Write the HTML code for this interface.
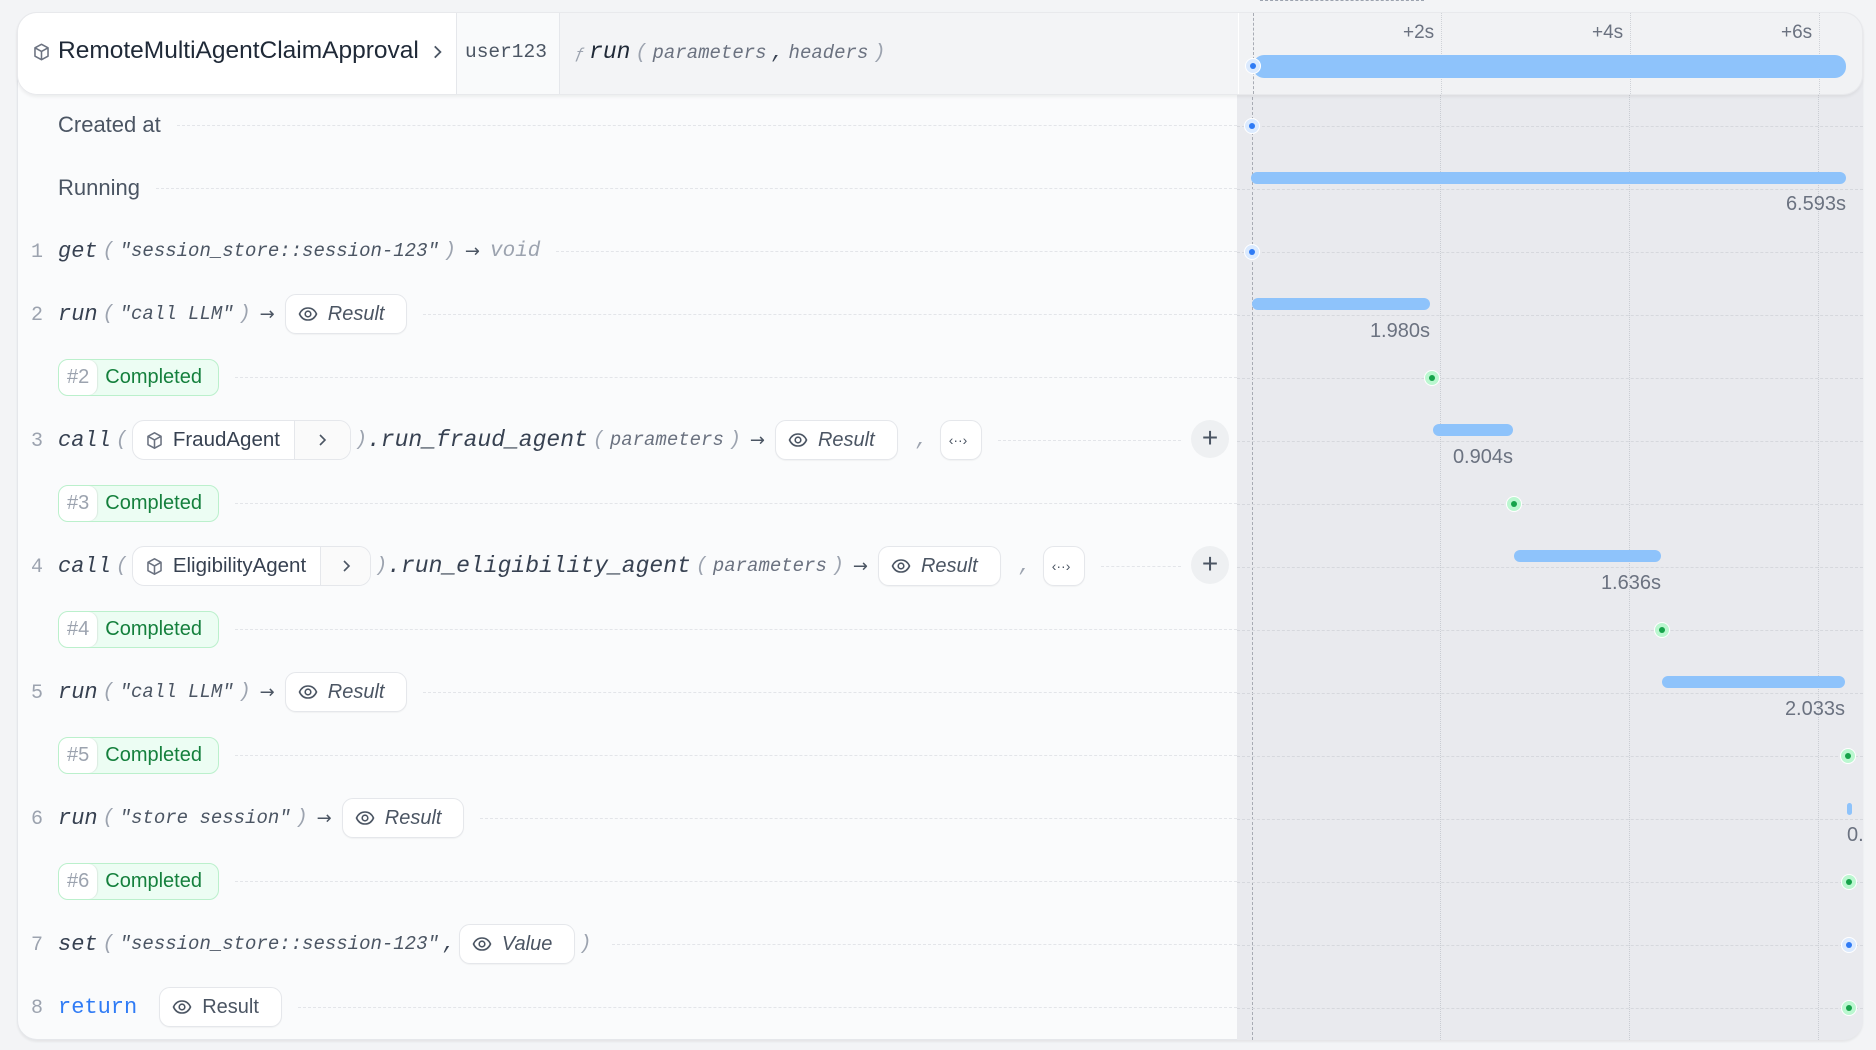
<!DOCTYPE html>
<html><head><meta charset="utf-8"><style>
*{box-sizing:border-box;margin:0;padding:0}
body{width:1876px;height:1050px;background:#f3f4f6;position:relative;overflow:hidden;font-family:"Liberation Sans",sans-serif}
.abs{position:absolute}
.card{left:17px;top:12px;width:1846px;height:1028px;border-radius:20px;background:#fafbfc;border:1px solid #e5e7eb;box-shadow:0 2px 2px rgba(0,0,0,.06);overflow:hidden}
.tl{left:1237px;top:12px;width:626px;height:1028px;background:#e9eaee;overflow:hidden;border-radius:0 20px 20px 0}
.vg{position:absolute;top:0;bottom:0;border-left:1px dotted #c9ccd2}
.hl{position:absolute;left:0;right:0;border-top:1px dashed #d6d8dd}
.bar{position:absolute;height:12px;border-radius:6px;background:#8ec3fb}
.dur{position:absolute;font-size:20px;color:#6b7280;transform:translateX(-100%)}
.dot{position:absolute;width:16px;height:16px;border-radius:50%;margin:-8px 0 0 -8px;border:1px solid #fff}
.dot::after{content:"";position:absolute;left:4px;top:4px;width:6px;height:6px;border-radius:50%}
.db{background:#dbeafe}.db::after{background:#2f7bf5}
.dg{background:#bbf7d0}.dg::after{background:#16a34a}
.row{position:absolute;left:58px;width:1179px;height:50px;display:flex;align-items:center;white-space:nowrap}
.ln{position:absolute;left:30px;width:14px;text-align:center;font-family:"Liberation Mono",monospace;font-size:20px;color:#9ca3af}
.m{font-family:"Liberation Mono",monospace;font-style:italic;font-size:19px}
.fn{color:#374151;font-size:22px}
.mt{color:#374151;font-size:23px}
.p{color:#9ca3af;margin:0 5px;font-size:20px}
.s{color:#4b5563}
.ar{color:#4b5563;margin:0 10px;font-family:"DejaVu Sans",sans-serif;font-size:18px}
.lead{flex:1;border-top:1px dashed #e3e5e9;margin-left:16px;margin-right:0}
.chip{display:inline-flex;align-items:center;height:40px;border:1px solid #e5e7eb;border-radius:11px;background:#fff;padding:0 22px 0 12px;font-size:20px;color:#4b5563;font-style:italic;box-shadow:0 1px 1px rgba(0,0,0,.04)}
.chip svg{margin-right:10px}
.badge{display:inline-flex;height:37px;border:1px solid #bbf0cc;border-radius:10px;background:#ecfdf3;font-size:20px;overflow:hidden}
.badge .n{background:#fff;color:#9ca3af;padding:0 8px;display:flex;align-items:center;border-radius:9px;box-shadow:1px 0 1px rgba(0,0,0,.08)}
.badge .c{color:#15803d;padding:0 16px 0 8px;display:flex;align-items:center}
.agent{display:inline-flex;align-items:center;height:40px;border:1px solid #e5e7eb;border-radius:12px;background:#fff;font-size:20.5px;color:#374151;overflow:hidden}
.agent .a{display:flex;align-items:center;padding:0 14px 0 12px;height:100%}
.agent .b{display:flex;align-items:center;justify-content:center;height:100%;border-left:1px solid #e5e7eb;background:#fafafa;color:#4b5563;width:56px}
.plus{position:absolute;left:1191px;width:38px;height:38px;border-radius:50%;background:#eef0f2;color:#4b5563;font-size:28px;line-height:36px;text-align:center}
.lbl{font-size:22px;color:#4b5563}
</style></head><body>
<div class="abs" style="left:1260px;top:0;width:164px;border-top:1px dashed #9ca3af"></div>
<div class="abs card"></div>
<div class="abs tl">
 <div class="vg" style="left:203px"></div>
 <div class="vg" style="left:392px"></div>
 <div class="vg" style="left:581px"></div>
 <div class="vg" style="left:15px;border-left:1px dashed #a8acb4"></div>
 <div class="hl" style="top:114px"></div><div class="hl" style="top:177px"></div><div class="hl" style="top:240px"></div><div class="hl" style="top:303px"></div><div class="hl" style="top:366px"></div><div class="hl" style="top:429px"></div><div class="hl" style="top:492px"></div><div class="hl" style="top:555px"></div><div class="hl" style="top:618px"></div><div class="hl" style="top:681px"></div><div class="hl" style="top:744px"></div><div class="hl" style="top:807px"></div><div class="hl" style="top:870px"></div><div class="hl" style="top:933px"></div><div class="hl" style="top:996px"></div>
</div>
<div class="dot db" style="left:1252px;top:126px"></div>
<div class="bar" style="left:1251px;top:172px;width:595px"></div>
<div class="dur" style="left:1846px;top:193px">6.593s</div>
<div class="dot db" style="left:1252px;top:252px"></div>
<div class="bar" style="left:1252px;top:298px;width:178px"></div>
<div class="dur" style="left:1430px;top:320px">1.980s</div>
<div class="dot dg" style="left:1432px;top:378px"></div>
<div class="bar" style="left:1433px;top:424px;width:80px"></div>
<div class="dur" style="left:1513px;top:446px">0.904s</div>
<div class="dot dg" style="left:1514px;top:504px"></div>
<div class="bar" style="left:1514px;top:550px;width:147px"></div>
<div class="dur" style="left:1661px;top:572px">1.636s</div>
<div class="dot dg" style="left:1662px;top:630px"></div>
<div class="bar" style="left:1662px;top:676px;width:183px"></div>
<div class="dur" style="left:1845px;top:698px">2.033s</div>
<div class="dot dg" style="left:1848px;top:756px"></div>
<div class="bar" style="left:1847px;top:803px;width:5px;height:12px"></div>
<div class="abs" style="left:1847px;top:824px;width:16px;overflow:hidden;font-size:20px;color:#6b7280">0.</div>
<div class="dot dg" style="left:1849px;top:882px"></div>
<div class="dot db" style="left:1849px;top:945px"></div>
<div class="dot dg" style="left:1849px;top:1008px"></div>

<div class="abs" style="left:17px;top:12px;width:1846px;height:83px;border-radius:20px;overflow:hidden;border:1px solid #e8e9ec;box-shadow:0 2px 3px rgba(0,0,0,.06)">
 <div class="abs" style="left:0;top:0;width:438px;height:83px;background:#fff"></div>
 <div class="abs" style="left:438px;top:0;width:103px;height:83px;background:#f9fafb;border-left:1px solid #e5e7eb"></div>
 <div class="abs" style="left:541px;top:0;width:679px;height:83px;background:#f3f4f6;border-left:1px solid #e5e7eb"></div>
 <div class="abs" style="left:1220px;top:0;width:626px;height:83px;background:#f1f2f4;border-left:1px solid #fff"></div>
 <div class="vg" style="left:1423px;border-left:1px dotted #cfd2d7"></div>
 <div class="vg" style="left:1612px;border-left:1px dotted #cfd2d7"></div>
 <div class="vg" style="left:1801px;border-left:1px dotted #cfd2d7"></div>
 <div class="vg" style="left:1235px;border-left:1px dashed #a8acb4"></div>
</div>
<svg class="abs" style="left:32px;top:42px" width="19" height="20" viewBox="0 0 16 16" fill="none" stroke="#6b7280" stroke-width="1.3" stroke-linejoin="round"><path d="M8 1.5l5.5 3v7L8 14.5l-5.5-3v-7z M2.5 4.5L8 7.5l5.5-3 M8 7.5v7"/></svg>
<div class="abs" style="left:58px;top:37px;font-size:24.5px;color:#1f2937">RemoteMultiAgentClaimApproval</div>
<svg class="abs" style="left:430px;top:43px" width="14" height="18" viewBox="0 0 10 16" fill="none" stroke="#4b5563" stroke-width="1.6"><path d="M3 3l5 5-5 5"/></svg>
<div class="abs m" style="left:465px;top:41px;font-style:normal;color:#4b5563;font-size:19.5px">user123</div>
<div class="abs" style="left:575px;top:39px;white-space:nowrap"><span class="m" style="color:#9ca3af;font-size:16px">ƒ</span> <span class="m fn" style="font-size:23px;color:#1f2937">run</span><span class="m p">(</span><span class="m s" style="color:#6b7280">parameters</span><span class="m p" style="color:#374151">,</span><span class="m s" style="color:#6b7280">headers</span><span class="m p">)</span></div>
<div class="abs" style="left:1403px;top:22px;font-size:19px;color:#6b7280">+2s</div>
<div class="abs" style="left:1592px;top:22px;font-size:19px;color:#6b7280">+4s</div>
<div class="abs" style="left:1781px;top:22px;font-size:19px;color:#6b7280">+6s</div>
<div class="bar" style="left:1253px;top:55px;width:593px;height:23px;border-radius:11px"></div>
<div class="dot db" style="left:1253px;top:66px"></div>

<svg width="0" height="0" style="position:absolute"><defs>
<symbol id="eye" viewBox="0 0 20 20"><path d="M1.5 10C3.5 5.5 7 4 10 4s6.5 1.5 8.5 6c-2 4.5-5.5 6-8.5 6s-6.5-1.5-8.5-6z" fill="none" stroke="#4b5563" stroke-width="1.6"/><circle cx="10" cy="10" r="2.8" fill="none" stroke="#4b5563" stroke-width="1.6"/></symbol>
<symbol id="cube" viewBox="0 0 16 16"><path d="M8 1.5l5.5 3v7L8 14.5l-5.5-3v-7z M2.5 4.5L8 7.5l5.5-3 M8 7.5v7" fill="none" stroke="#6b7280" stroke-width="1.3" stroke-linejoin="round"/></symbol>
</defs></svg>

<div class="row" style="top:100px"><span class="lbl">Created at</span><span class="lead"></span></div>
<div class="row" style="top:163px"><span class="lbl">Running</span><span class="lead"></span></div>

<div class="ln" style="top:241px">1</div>
<div class="row" style="top:226px"><span class="m fn">get</span><span class="m p">(</span><span class="m s">"session_store::session-123"</span><span class="m p">)</span><span class="ar" style="margin-left:4px">→</span><span class="m" style="color:#9ca3af;font-size:21px">void</span><span class="lead"></span></div>

<div class="ln" style="top:304px">2</div>
<div class="row" style="top:289px"><span class="m fn">run</span><span class="m p">(</span><span class="m s">"call LLM"</span><span class="m p">)</span><span class="ar" style="margin-left:4px">→</span><span class="chip"><svg width="20" height="20"><use href="#eye"/></svg>Result</span><span class="lead"></span></div>

<div class="row" style="top:352px"><span class="badge"><span class="n">#2</span><span class="c">Completed</span></span><span class="lead"></span></div>

<div class="ln" style="top:430px">3</div>
<div class="row" style="top:415px"><span class="m fn">call</span><span class="m p" style="margin-right:4px">(</span><span class="agent"><span class="a"><svg width="19" height="19" style="margin-right:9px"><use href="#cube"/></svg>FraudAgent</span><span class="b"><svg width="10" height="16" viewBox="0 0 10 16" fill="none" stroke="#4b5563" stroke-width="1.6"><path d="M3 3l5 5-5 5"/></svg></span></span><span class="m p" style="margin:0 0 0 4px">)</span><span class="m mt">.run_fraud_agent</span><span class="m p">(</span><span class="m s" style="color:#6b7280">parameters</span><span class="m p">)</span><span class="ar" style="margin-left:4px">→</span><span class="chip"><svg width="20" height="20"><use href="#eye"/></svg>Result</span><span class="m p" style="margin:0 12px 0 18px">,</span><span class="chip" style="padding:0 8px;width:42px;font-style:normal;font-size:14px">‹··›</span><span class="lead" style="margin-right:56px"></span></div>
<div class="plus" style="top:420px">+</div>

<div class="row" style="top:478px"><span class="badge"><span class="n">#3</span><span class="c">Completed</span></span><span class="lead"></span></div>

<div class="ln" style="top:556px">4</div>
<div class="row" style="top:541px"><span class="m fn">call</span><span class="m p" style="margin-right:4px">(</span><span class="agent"><span class="a"><svg width="19" height="19" style="margin-right:9px"><use href="#cube"/></svg>EligibilityAgent</span><span class="b" style="width:50px"><svg width="10" height="16" viewBox="0 0 10 16" fill="none" stroke="#4b5563" stroke-width="1.6"><path d="M3 3l5 5-5 5"/></svg></span></span><span class="m p" style="margin:0 0 0 4px">)</span><span class="m mt">.run_eligibility_agent</span><span class="m p">(</span><span class="m s" style="color:#6b7280">parameters</span><span class="m p">)</span><span class="ar" style="margin-left:4px">→</span><span class="chip"><svg width="20" height="20"><use href="#eye"/></svg>Result</span><span class="m p" style="margin:0 12px 0 18px">,</span><span class="chip" style="padding:0 8px;width:42px;font-style:normal;font-size:14px">‹··›</span><span class="lead" style="margin-right:56px"></span></div>
<div class="plus" style="top:546px">+</div>

<div class="row" style="top:604px"><span class="badge"><span class="n">#4</span><span class="c">Completed</span></span><span class="lead"></span></div>

<div class="ln" style="top:682px">5</div>
<div class="row" style="top:667px"><span class="m fn">run</span><span class="m p">(</span><span class="m s">"call LLM"</span><span class="m p">)</span><span class="ar" style="margin-left:4px">→</span><span class="chip"><svg width="20" height="20"><use href="#eye"/></svg>Result</span><span class="lead"></span></div>

<div class="row" style="top:730px"><span class="badge"><span class="n">#5</span><span class="c">Completed</span></span><span class="lead"></span></div>

<div class="ln" style="top:808px">6</div>
<div class="row" style="top:793px"><span class="m fn">run</span><span class="m p">(</span><span class="m s">"store session"</span><span class="m p">)</span><span class="ar" style="margin-left:4px">→</span><span class="chip"><svg width="20" height="20"><use href="#eye"/></svg>Result</span><span class="lead"></span></div>

<div class="row" style="top:856px"><span class="badge"><span class="n">#6</span><span class="c">Completed</span></span><span class="lead"></span></div>

<div class="ln" style="top:934px">7</div>
<div class="row" style="top:919px"><span class="m fn">set</span><span class="m p">(</span><span class="m s">"session_store::session-123"</span><span class="m p" style="color:#374151;margin:0 4px 0 4px">,</span><span class="chip"><svg width="20" height="20"><use href="#eye"/></svg>Value</span><span class="m p" style="margin-left:4px">)</span><span class="lead"></span></div>

<div class="ln" style="top:997px">8</div>
<div class="row" style="top:982px"><span class="m" style="font-style:normal;color:#2f7bf5;font-size:22px;margin-right:22px">return</span><span class="chip" style="font-style:normal"><svg width="20" height="20"><use href="#eye"/></svg>Result</span><span class="lead"></span></div>
</body></html>
